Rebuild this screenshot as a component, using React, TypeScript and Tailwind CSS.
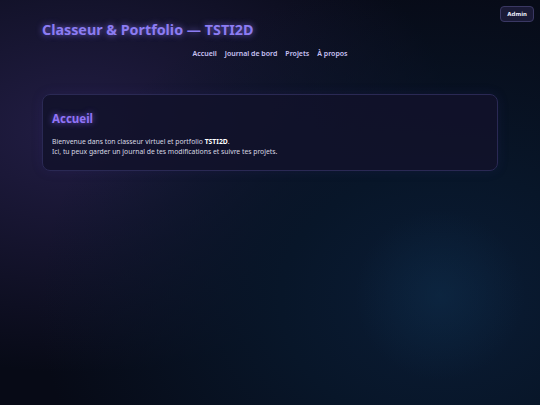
export default function App() {
  return (
    <div className="relative min-h-screen w-full overflow-hidden bg-[#070a16] bg-[radial-gradient(circle_at_440px_295px,rgba(14,44,72,0.55)_0px,transparent_85px),radial-gradient(ellipse_75%_80%_at_82%_74%,#0a1c35_0%,#081629_40%,transparent_100%),radial-gradient(ellipse_70%_60%_at_14%_32%,#221d44_0%,transparent_100%)] font-['Noto_Sans',sans-serif] text-[#d9d9e4]">
      <button
        type="button"
        className="absolute right-[6px] top-[6px] rounded-[4px] border border-[#3a3863] bg-[#1a1a36] px-[6px] py-[3px] font-['DejaVu_Sans',sans-serif] text-[5.5px] font-bold text-[#e6e6f5]"
      >
        Admin
      </button>

      <header className="px-[42px] pt-[20px]">
        <h1 className="text-[14.3px] font-bold leading-[20px] text-[#8c7cf2] [text-shadow:0_0_6px_rgba(140,120,255,0.75)]">
          Classeur &amp; Portfolio — TSTI2D
        </h1>
        <nav className="mt-[9px] flex justify-center gap-[8px] text-[7px] font-semibold text-[#c9c2f4]">
          <a>Accueil</a>
          <a>Journal de bord</a>
          <a>Projets</a>
          <a>À propos</a>
        </nav>
      </header>

      <main className="mx-[42px] mt-[34px]">
        <section className="rounded-[8px] border border-[#2a2954] bg-[#12122a]/85 px-[9px] pb-[13px] pt-[16px] shadow-[0_0_12px_rgba(60,50,140,0.15)]">
          <h2 className="text-[11.5px] font-bold leading-[16px] text-[#9073f6] [text-shadow:0_0_6px_rgba(140,110,255,0.75)]">
            Accueil
          </h2>
          <p className="mt-[10px] text-[6.8px] leading-[10px]">
            Bienvenue dans ton classeur virtuel et portfolio <strong className="font-bold text-white">TSTI2D</strong>.
            <br />
            Ici, tu peux garder un journal de tes modifications et suivre tes projets.
          </p>
        </section>
      </main>
    </div>
  );
}
